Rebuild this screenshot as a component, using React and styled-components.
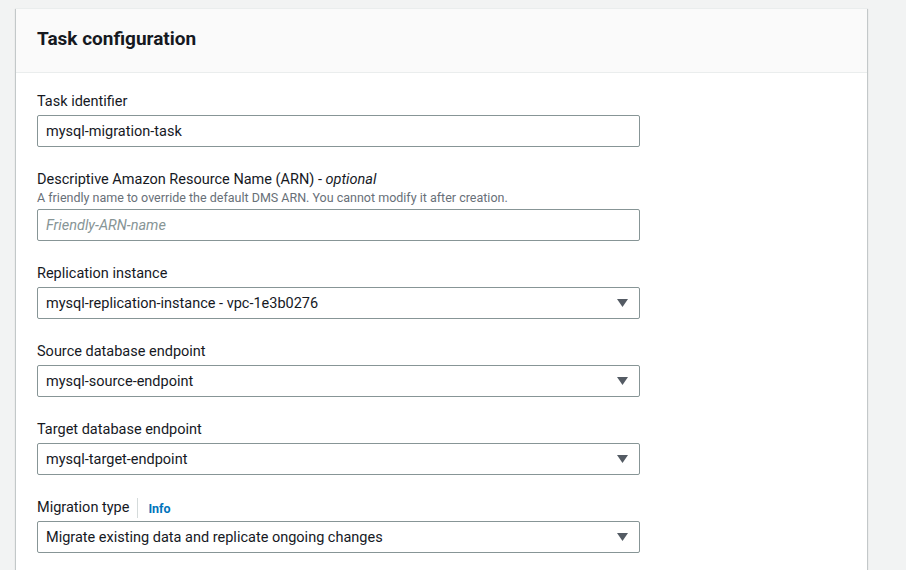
import React from "react";
import styled, { createGlobalStyle } from "styled-components";

const Global = createGlobalStyle`
  html, body { margin: 0; padding: 0; background: #f2f3f3; }
  body { font-family: Roboto, "Noto Sans", "Liberation Sans", sans-serif; color: #16191f; }
`;

const Page = styled.div`
  padding: 8px 0 0 16px;
  height: 562px;
  overflow: hidden;
`;

const Card = styled.section`
  width: 851px;
  background: #ffffff;
  border-top: 1px solid #eaeded;
  box-shadow: 0 1px 1px 0 rgba(0, 28, 36, 0.3), 1px 1px 1px 0 rgba(0, 28, 36, 0.15),
    -1px 1px 1px 0 rgba(0, 28, 36, 0.15);
  min-height: 600px;
`;

const Header = styled.header`
  background: #fafafa;
  border-bottom: 1px solid #eaeded;
  height: 64px;
  padding: 0 20px 4px 21px;
  display: flex;
  align-items: center;
  box-sizing: border-box;
`;

const Title = styled.h2`
  margin: 0;
  font-size: 19px;
  line-height: 22px;
  font-weight: 700;
  color: #16191f;
`;

const Body = styled.div`
  padding: 17px 20px 20px 21px;
  display: flex;
  flex-direction: column;
  gap: 21px;
`;

const Field = styled.div`
  display: flex;
  flex-direction: column;
`;

const LabelRow = styled.div`
  display: flex;
  align-items: center;
  height: 20px;
  padding-top: 2px;
  margin-bottom: ${(p) => (p.$tight ? "0" : "3px")};
`;

const Label = styled.label`
  font-size: 14.5px;
  line-height: 20px;
  color: #16191f;
`;

const Optional = styled.i`
  font-style: italic;
`;

const Divider = styled.span`
  width: 1px;
  height: 20px;
  background: #d5dbdb;
  margin: 0 10px 0 8px;
`;

const InfoLink = styled.a`
  font-size: 12.5px;
  font-weight: 700;
  color: #0073bb;
  text-decoration: none;
`;

const Help = styled.div`
  font-size: 12.5px;
  line-height: 16px;
  color: #687078;
  margin-bottom: 3px;
`;

const Input = styled.div`
  width: 603px;
  height: 32px;
  box-sizing: border-box;
  border: 1px solid #879596;
  border-radius: 2px;
  padding: 0 9px 0 8px;
  display: flex;
  align-items: center;
  justify-content: space-between;
  font-size: 14.5px;
  color: ${(p) => (p.$placeholder ? "#879596" : "#16191f")};
  font-style: ${(p) => (p.$placeholder ? "italic" : "normal")};
  background: #fff;
`;

const Caret = () => (
  <svg width="11" height="8" viewBox="0 0 11 8" style={{ marginRight: 2 }}>
    <path d="M0 0 H11 L5.5 8 Z" fill="#545b64" />
  </svg>
);

const SimpleField = ({ label, value, select }) => (
  <Field>
    <LabelRow>{label}</LabelRow>
    <Input>
      <span>{value}</span>
      {select && <Caret />}
    </Input>
  </Field>
);

export default function App() {
  return (
    <>
      <Global />
      <Page>
        <Card>
          <Header>
            <Title>Task configuration</Title>
          </Header>
          <Body>
            <SimpleField label={<Label>Task identifier</Label>} value="mysql-migration-task" />
            <Field>
              <LabelRow $tight>
                <Label>
                  Descriptive Amazon Resource Name (ARN) - <Optional>optional</Optional>
                </Label>
              </LabelRow>
              <Help>A friendly name to override the default DMS ARN. You cannot modify it after creation.</Help>
              <Input $placeholder>
                <span>Friendly-ARN-name</span>
              </Input>
            </Field>
            <SimpleField
              label={<Label>Replication instance</Label>}
              value="mysql-replication-instance - vpc-1e3b0276"
              select
            />
            <SimpleField label={<Label>Source database endpoint</Label>} value="mysql-source-endpoint" select />
            <SimpleField label={<Label>Target database endpoint</Label>} value="mysql-target-endpoint" select />
            <SimpleField
              label={
                <>
                  <Label>Migration type</Label>
                  <Divider />
                  <InfoLink href="#">Info</InfoLink>
                </>
              }
              value="Migrate existing data and replicate ongoing changes"
              select
            />
          </Body>
        </Card>
      </Page>
    </>
  );
}
